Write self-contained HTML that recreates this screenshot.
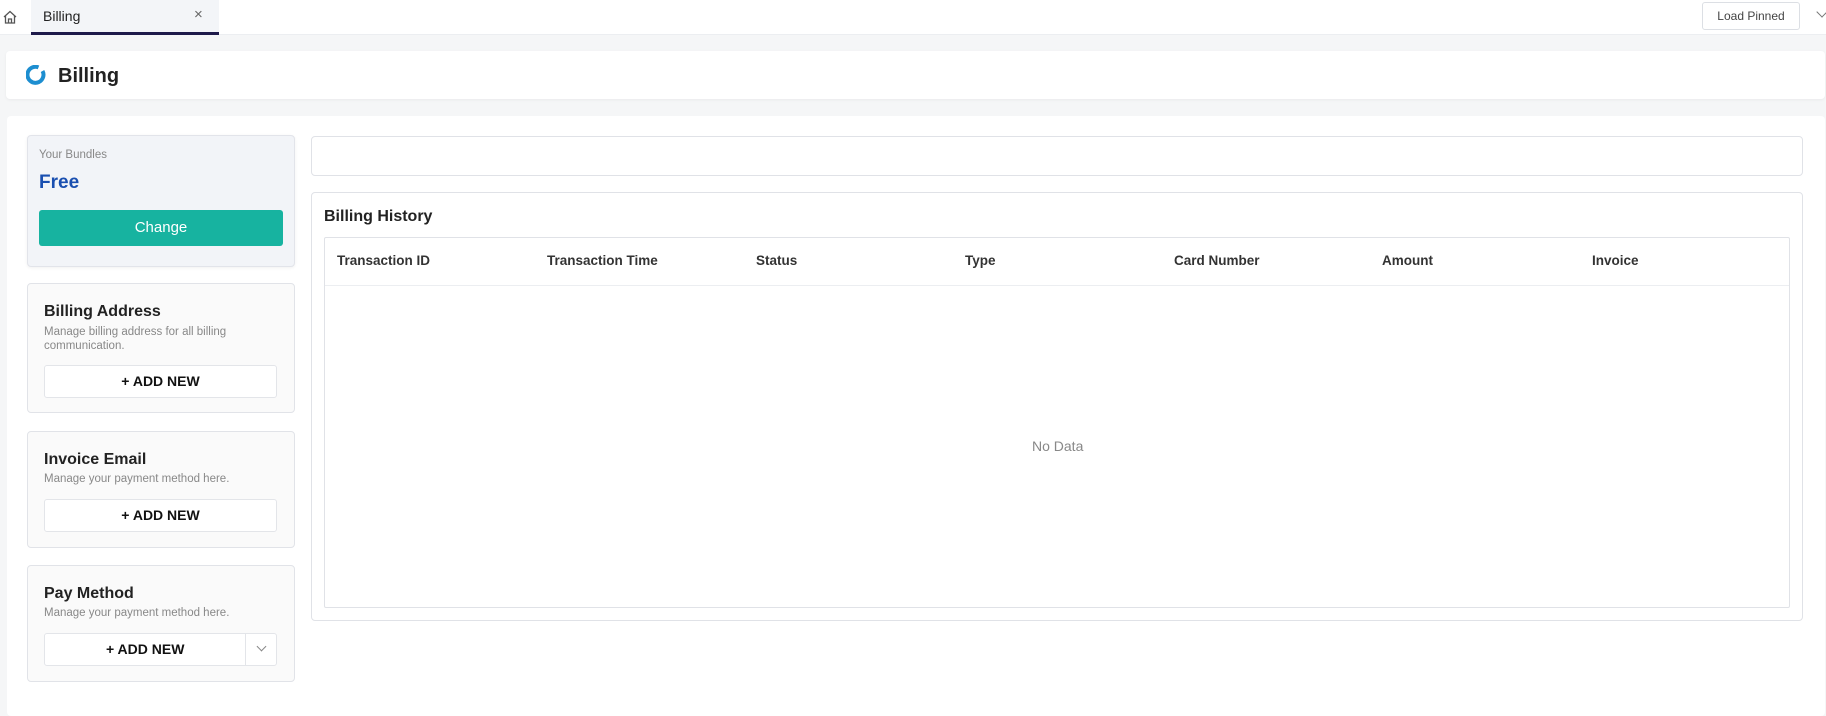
<!DOCTYPE html>
<html><head><style>
*{box-sizing:border-box;margin:0;padding:0}
body{width:1826px;height:692px;overflow:hidden;background:#f5f6f7;font-family:"Liberation Sans",Arial,sans-serif;color:#222;position:relative}
.a{position:absolute}
.topbar{left:0;top:0;width:1826px;height:35px;background:#fff;border-bottom:1px solid #eceef1}
.card{background:#fff;border-radius:4px}
.side{background:#fafafa;border:1px solid #e1e3e8;border-radius:4px}
.btn{background:#fff;border:1px solid #e3e5e9;border-radius:3px;font-weight:bold;font-size:14px;text-align:center;color:#111}
.t{font-size:16px;font-weight:bold;color:#222}
.d{font-size:11.5px;color:#888;line-height:14px}
.th{font-size:13.5px;font-weight:bold;color:#333;top:253px}
</style></head><body>
<div class="a topbar"></div>
<svg class="a" style="left:2px;top:9px" width="16" height="16" viewBox="0 0 16 16"><path d="M2 8 L8 2.5 L14 8 M3.5 7 V14 H12.5 V7 M6.5 14 V10 H9.5 V14" fill="none" stroke="#555" stroke-width="1.3"/></svg>
<div class="a" style="left:31px;top:0;width:188px;height:35px;background:#f3f5f8;border-bottom:3px solid #1e1a4a"></div>
<div class="a" style="left:43px;top:8px;font-size:14px;color:#222">Billing</div>
<div class="a" style="left:194px;top:6px;font-size:15px;color:#666">×</div>
<div class="a" style="left:1702px;top:2px;width:98px;height:28px;border:1px solid #dcdfe4;border-radius:3px;background:#fff;font-size:12px;color:#444;text-align:center;line-height:26px">Load Pinned</div>
<div class="a" style="left:1818px;top:8px;width:8px;height:8px;border-right:1px solid #777;border-bottom:1px solid #777;transform:rotate(45deg)"></div>

<div class="a card" style="left:6px;top:51px;width:1819px;height:48px;box-shadow:0 1px 3px rgba(0,0,0,.05)"></div>
<svg class="a" style="left:26px;top:65px" width="20" height="20" viewBox="0 0 20 20"><path d="M16.5 6 A8 8 0 1 1 12.5 2.4" fill="none" stroke="#1d8ed0" stroke-width="4"/></svg>
<div class="a" style="left:58px;top:65px;font-size:20px;font-weight:bold;color:#222">Billing</div>

<div class="a card" style="left:7px;top:116px;width:1818px;height:600px"></div>

<div class="a" style="left:27px;top:135px;width:268px;height:132px;background:#f2f4f8;border:1px solid #e2e4ea;border-radius:4px;box-shadow:0 1px 3px rgba(0,0,0,.06)"></div>
<div class="a" style="left:39px;top:149px;font-size:11.5px;color:#888">Your Bundles</div>
<div class="a" style="left:39px;top:172px;font-size:19px;font-weight:bold;color:#1a4fb0">Free</div>
<div class="a" style="left:39px;top:210px;width:244px;height:36px;background:#17b3a0;border-radius:3px;color:#fff;font-size:15px;text-align:center;line-height:36px">Change</div>

<div class="a side" style="left:27px;top:283px;width:268px;height:130px"></div>
<div class="a t" style="left:44px;top:303px">Billing Address</div>
<div class="a d" style="left:44px;top:325px;width:220px">Manage billing address for all billing communication.</div>
<div class="a btn" style="left:44px;top:365px;width:233px;height:33px;line-height:31px">+ ADD NEW</div>

<div class="a side" style="left:27px;top:431px;width:268px;height:117px"></div>
<div class="a t" style="left:44px;top:451px">Invoice Email</div>
<div class="a d" style="left:44px;top:472px">Manage your payment method here.</div>
<div class="a btn" style="left:44px;top:499px;width:233px;height:33px;line-height:31px">+ ADD NEW</div>

<div class="a side" style="left:27px;top:565px;width:268px;height:117px"></div>
<div class="a t" style="left:44px;top:585px">Pay Method</div>
<div class="a d" style="left:44px;top:606px">Manage your payment method here.</div>
<div class="a btn" style="left:44px;top:633px;width:233px;height:33px;line-height:31px;text-align:left;padding-left:61px">+ ADD NEW</div>
<div class="a" style="left:245px;top:634px;width:1px;height:31px;background:#e3e5e9"></div>
<div class="a" style="left:258px;top:643px;width:7px;height:7px;border-right:1px solid #888;border-bottom:1px solid #888;transform:rotate(45deg)"></div>

<div class="a" style="left:311px;top:136px;width:1492px;height:40px;border:1px solid #e0e2e7;border-radius:4px;background:#fff"></div>
<div class="a" style="left:311px;top:192px;width:1492px;height:429px;border:1px solid #e0e2e7;border-radius:4px;background:#fff"></div>
<div class="a" style="left:324px;top:208px;font-size:16px;font-weight:bold;color:#222">Billing History</div>
<div class="a" style="left:324px;top:237px;width:1466px;height:371px;border:1px solid #e0e2e7;border-radius:2px"></div>
<div class="a" style="left:325px;top:285px;width:1464px;height:1px;background:#eceef1"></div>
<div class="a th" style="left:337px">Transaction ID</div>
<div class="a th" style="left:547px">Transaction Time</div>
<div class="a th" style="left:756px">Status</div>
<div class="a th" style="left:965px">Type</div>
<div class="a th" style="left:1174px">Card Number</div>
<div class="a th" style="left:1382px">Amount</div>
<div class="a th" style="left:1592px">Invoice</div>
<div class="a" style="left:1032px;top:438px;font-size:14px;color:#888">No Data</div>
</body></html>
